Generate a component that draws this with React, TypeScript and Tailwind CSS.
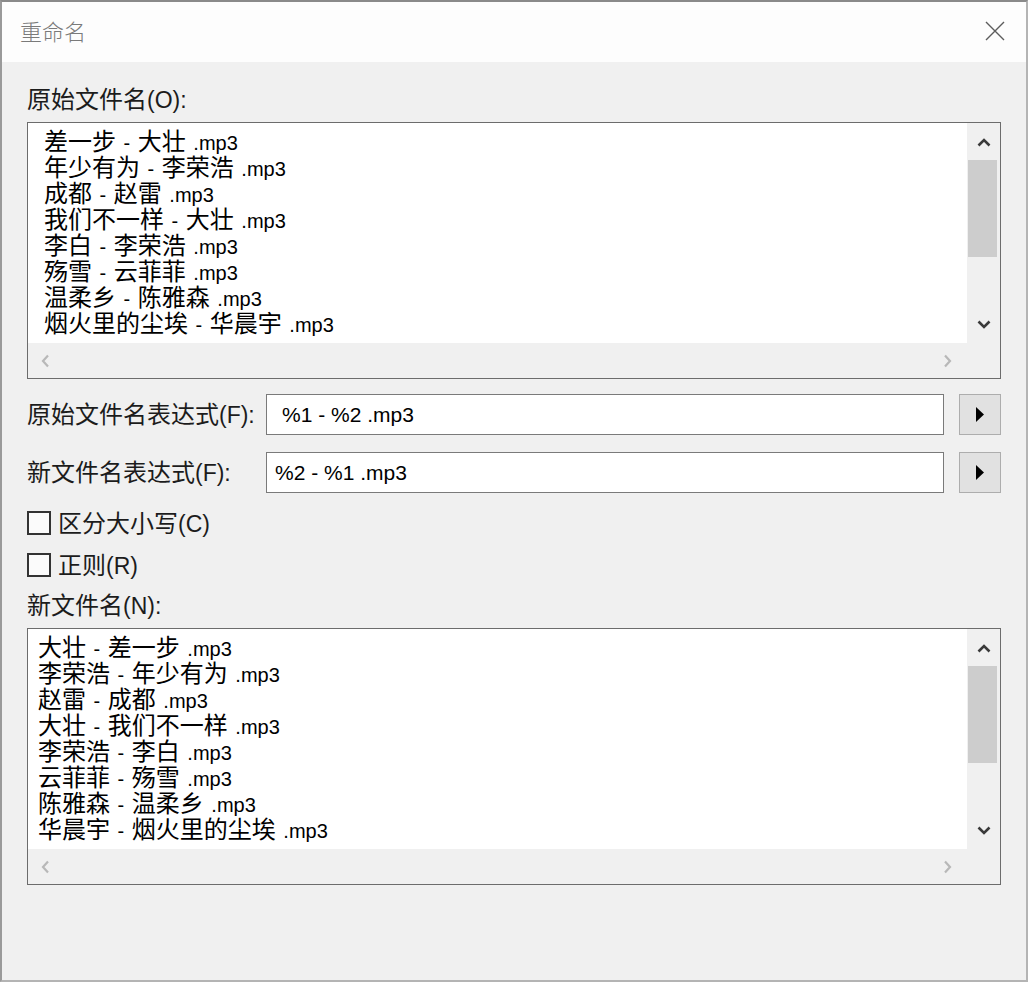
import React from 'react';

const ORIGINAL = [
  '差一步 - 大壮 .mp3',
  '年少有为 - 李荣浩 .mp3',
  '成都 - 赵雷 .mp3',
  '我们不一样 - 大壮 .mp3',
  '李白 - 李荣浩 .mp3',
  '殇雪 - 云菲菲 .mp3',
  '温柔乡 - 陈雅森 .mp3',
  '烟火里的尘埃 - 华晨宇 .mp3',
];

const RENAMED = [
  '大壮 - 差一步 .mp3',
  '李荣浩 - 年少有为 .mp3',
  '赵雷 - 成都 .mp3',
  '大壮 - 我们不一样 .mp3',
  '李荣浩 - 李白 .mp3',
  '云菲菲 - 殇雪 .mp3',
  '陈雅森 - 温柔乡 .mp3',
  '华晨宇 - 烟火里的尘埃 .mp3',
];

// split a line into CJK runs and latin runs so each gets its own size
const Mixed: React.FC<{ text: string; big?: boolean }> = ({ text, big }) => {
  const parts = text.split(/([\u3000-\u9fff\uff00-\uffef]+)/).filter(Boolean);
  return (
    <>
      {parts.map((p, i) =>
        /[\u3000-\u9fff]/.test(p) ? (
          <span key={i} className="inline-block text-[24px] leading-none font-['Noto_Sans_CJK_SC',sans-serif]">{p}</span>
        ) : big ? (
          <span key={i} className="inline-block text-[23px] leading-none font-['Liberation_Sans','Noto_Sans_CJK_SC',sans-serif] whitespace-pre">{p}</span>
        ) : (
          <span key={i} className="inline-block text-[20px] leading-none font-['Liberation_Sans','Noto_Sans_CJK_SC',sans-serif] whitespace-pre [word-spacing:2px]">{p}</span>
        )
      )}
    </>
  );
};

const ChevronUp = () => (
  <svg width="14" height="9" viewBox="0 0 14 9">
    <path d="M1.5 7.5 L7 2 L12.5 7.5" stroke="#3a3a3a" strokeWidth="2.6" fill="none" />
  </svg>
);

const ChevronDown = () => (
  <svg width="14" height="9" viewBox="0 0 14 9">
    <path d="M1.5 1.5 L7 7 L12.5 1.5" stroke="#3a3a3a" strokeWidth="2.6" fill="none" />
  </svg>
);

const ChevronLeft = () => (
  <svg width="9" height="14" viewBox="0 0 9 14">
    <path d="M7 1.5 L2 7 L7 12.5" stroke="#b8b8b8" strokeWidth="2.2" fill="none" />
  </svg>
);

const ChevronRight = () => (
  <svg width="9" height="14" viewBox="0 0 9 14">
    <path d="M2 1.5 L7 7 L2 12.5" stroke="#b8b8b8" strokeWidth="2.2" fill="none" />
  </svg>
);

const ListBox: React.FC<{ items: string[]; pad: string }> = ({ items, pad }) => (
  <div className="h-[257px] border border-[#6c6c6c] bg-[#f0f0f0] grid grid-cols-[1fr_33px] grid-rows-[220px_35px]">
    <div className={`bg-white overflow-hidden pt-[4px] text-black text-[23px] leading-[26px] font-['Noto_Sans_CJK_SC',sans-serif] ${pad}`}>
      {items.map((t) => (
        <div key={t} className="h-[26px] whitespace-nowrap">
          <Mixed text={t} />
        </div>
      ))}
    </div>
    <div className="flex flex-col">
      <div className="h-[37px] flex items-center justify-center pt-[2px]">
        <ChevronUp />
      </div>
      <div className="ml-[1px] w-[29px] h-[97px] bg-[#cdcdcd]" />
      <div className="flex-1" />
      <div className="h-[37px] flex items-center justify-center">
        <ChevronDown />
      </div>
    </div>
    <div className="flex items-center justify-between pl-[13px] pr-[15px]">
      <ChevronLeft />
      <ChevronRight />
    </div>
    <div />
  </div>
);

const ExprRow: React.FC<{ label: string; value: string; pad: string }> = ({ label, value, pad }) => (
  <div className="flex items-center h-[41px]">
    <div className="w-[239px] text-[23px] leading-[26px] text-[#1c1c1c] pb-[3px] whitespace-nowrap">
      <Mixed text={label} big />
    </div>
    <div className={`flex-1 h-full bg-white border border-[#7a7a7a] flex items-center text-black ${pad}`}>
      <span className="text-[21px] font-['Liberation_Sans',sans-serif] whitespace-pre">{value}</span>
    </div>
    <button className="ml-[15px] w-[42px] h-full bg-[#e1e1e1] border border-[#adadad] flex items-center justify-center">
      <svg width="8" height="15" viewBox="0 0 8 15">
        <path d="M0 0 L8 7.5 L0 15 Z" fill="#000" />
      </svg>
    </button>
  </div>
);

const Check: React.FC<{ label: string }> = ({ label }) => (
  <div className="flex items-center h-[26px] text-[23px] leading-[26px] text-[#1c1c1c]">
    <div className="w-[24px] h-[24px] border-2 border-[#333333] bg-[#fbfbfb]" />
    <div className="ml-[7px] pb-[2px]">
      <Mixed text={label} big />
    </div>
  </div>
);

const App: React.FC = () => {
  return (
    <div className="w-[1028px] h-[982px] bg-[#f0f0f0] border-2 border-[#b4b4b4] border-t-[#8a8a8a] border-l-[#9a9a9a] flex flex-col font-['Noto_Sans_CJK_SC',sans-serif]">
      <div className="h-[60px] bg-[#fdfdfd] flex items-center justify-between pl-[18px] pr-[21px]">
        <span className="text-[22px] text-[#7a7a7a] font-light mb-[4px]">重命名</span>
        <svg width="20" height="20" viewBox="0 0 20 20" className="mb-[2px]">
          <path d="M1 1 L19 19 M19 1 L1 19" stroke="#5c5c5c" strokeWidth="1.4" />
        </svg>
      </div>

      <div className="flex-1 px-[25px] pt-[23px] flex flex-col">
        <div className="text-[23px] leading-[26px] text-[#1c1c1c] h-[28px]">
          <Mixed text="原始文件名(O):" big />
        </div>
        <div className="mt-[9px]">
          <ListBox items={ORIGINAL} pad="pl-[16px]" />
        </div>

        <div className="mt-[15px]">
          <ExprRow label="原始文件名表达式(F):" value="%1 - %2 .mp3" pad="pl-[15px]" />
        </div>
        <div className="mt-[17px]">
          <ExprRow label="新文件名表达式(F):" value="%2 - %1 .mp3" pad="pl-[8px]" />
        </div>

        <div className="mt-[17px]">
          <Check label="区分大小写(C)" />
        </div>
        <div className="mt-[16px]">
          <Check label="正则(R)" />
        </div>

        <div className="mt-[13px] text-[23px] leading-[26px] text-[#1c1c1c] h-[28px]">
          <Mixed text="新文件名(N):" big />
        </div>
        <div className="mt-[9px]">
          <ListBox items={RENAMED} pad="pl-[10px]" />
        </div>
      </div>
    </div>
  );
};

export default App;
